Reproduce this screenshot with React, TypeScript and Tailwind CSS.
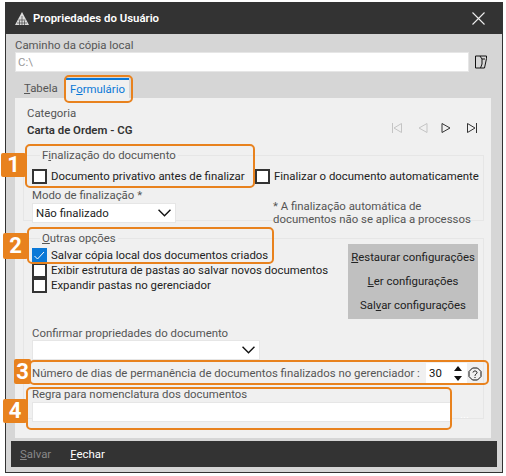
const orange = "absolute rounded-[5px] border-[2px] border-[#e8821e]";
const badge = "absolute flex items-center justify-center rounded-[2px] bg-[#e8821e] text-[22px] font-bold leading-none text-white";

function Check({ checked = false }: { checked?: boolean }) {
  if (checked) {
    return (
      <span className="flex size-[15px] shrink-0 items-center justify-center bg-[#0a78d7]">
        <svg viewBox="0 0 15 15" className="size-[15px]" fill="none" stroke="#fff" strokeWidth="1">
          <path d="M2.5 8 L5.5 11 L12 4" />
        </svg>
      </span>
    );
  }
  return <span className="size-[15px] shrink-0 border-2 border-[#333] bg-white" />;
}

function CheckRow({ label, checked }: { label: string; checked?: boolean }) {
  return (
    <div className="flex h-[15px] items-center gap-[4px] text-[#222]">
      <Check checked={checked} />
      <span className="whitespace-nowrap">{label}</span>
    </div>
  );
}

function Chevron({ className }: { className: string }) {
  return (
    <svg viewBox="0 0 12 7" className={className} fill="none" stroke="#111" strokeWidth="1.3">
      <path d="M0.5 0.5 L6 6 L11.5 0.5" />
    </svg>
  );
}

function Pager() {
  return (
    <div className="flex items-center">
      <svg width="12" height="12" viewBox="0 0 12 12" fill="none" stroke="#c4c4c4">
        <path d="M1.5 1V11M10.5 1.5V10.5L3 6Z" />
      </svg>
      <svg className="ml-[15px]" width="10" height="12" viewBox="0 0 10 12" fill="none" stroke="#c4c4c4">
        <path d="M9 1.5V10.5L1 6Z" />
      </svg>
      <svg className="ml-[13px]" width="10" height="12" viewBox="0 0 10 12" fill="none" stroke="#333">
        <path d="M1 1.5V10.5L9 6Z" />
      </svg>
      <svg className="ml-[15px]" width="12" height="12" viewBox="0 0 12 12" fill="none" stroke="#333">
        <path d="M1.5 1.5V10.5L9 6ZM10.5 1V11" />
      </svg>
    </div>
  );
}

export default function App() {
  return (
    <div
      className="relative h-[476px] w-[506px] overflow-hidden bg-white pl-[5px] pt-[2px] text-[11.4px] leading-[15px] text-[#555]"
      style={{ fontFamily: 'Roboto, Arial, sans-serif' }}
    >
      <div className="flex h-[471px] w-[498px] flex-col border border-t-0 border-[#333] bg-[#d6d6d6]">
        <header className="flex h-[32px] shrink-0 items-center justify-between bg-[#333] pl-[9px] pr-[17px] text-white">
          <div className="flex items-center gap-[4px]">
            <svg width="14" height="13" viewBox="0 0 14 13" fill="#ddd">
              <path d="M7 0 L14 13 H0 Z" />
              <path d="M7 4V13M4.5 8.5V13M9.5 8.5V13M2 11H12M3.5 8H10.5" stroke="#333" strokeWidth="0.6" />
            </svg>
            <span className="pt-[1px] font-semibold">Propriedades do Usuário</span>
          </div>
          <svg width="13" height="13" viewBox="0 0 13 13" stroke="#eee" strokeWidth="1.1">
            <path d="M0.5 0.5 L12.5 12.5 M12.5 0.5 L0.5 12.5" />
          </svg>
        </header>

        <div className="flex min-h-0 flex-1 flex-col pl-[9px] pr-[11px]">
          <div className="-mb-[1px] pt-[4px]">Caminho da cópia local</div>
          <div className="flex items-center">
            <div className="flex h-[20px] w-[454px] items-center border border-[#e6e6e6] bg-white pl-[2px] text-[#999]">C:\</div>
            <svg className="ml-[6px]" width="12" height="14" viewBox="0 0 12 14" fill="none" stroke="#111">
              <path d="M0.5 1H11.5V3.5L9.5 13H0.5Z M5 1 L7 4 V9 L5.5 13 M7 4 H10" />
            </svg>
          </div>

          <div className="mt-[6px] flex h-[20px] items-end pl-[9px]">
            <div className="flex h-[19px] w-[42px] items-center"><span><u>T</u>abela</span></div>
            <div className="flex h-[20px] w-[63px] items-center justify-center border-t-2 border-[#0a78d7] bg-[#f0f0f0] text-[#0a78d7]">
              <span>F<u>o</u>rmulário</span>
            </div>
          </div>

          <main className="flex-1 bg-[#f0f0f0] pl-[8px] pr-[7px] pt-[8px]">
            <div className="flex items-start justify-between pl-[4px] pr-[6px]">
              <div>
                <div>Categoria</div>
                <div className="mt-[2px] font-semibold text-[#333]">Carta de Ordem - CG</div>
              </div>
              <div className="pt-[16px]"><Pager /></div>
            </div>

            <fieldset className="mt-[11px] h-[72px] border border-[#e6e6e6] pl-[8px]">
              <legend className="ml-[8px] px-[2px] leading-[12px]">F<u>i</u>nalização do documento</legend>
              <div className="mt-[8px] flex">
                <div className="w-[223px]"><CheckRow label="Documento privativo antes de finalizar" /></div>
                <CheckRow label="Finalizar o documento automaticamente" />
              </div>
              <div className="mt-[4px] flex">
                <div className="w-[241px]">
                  <div>Modo de finalização *</div>
                  <div className="flex h-[20px] w-[144px] items-center justify-between border border-[#e6e6e6] bg-white pl-[3px] pr-[4px] text-[#222]">
                    Não finalizado
                    <Chevron className="h-[8px] w-[13px]" />
                  </div>
                </div>
                <div className="whitespace-nowrap pt-[12px] leading-[13px]">* A finalização automática de<br />documentos não se aplica a processos</div>
              </div>
            </fieldset>

            <fieldset className="mt-[11px] h-[187px] border border-[#e6e6e6] pl-[8px]">
              <legend className="ml-[8px] px-[2px] leading-[12px]"><u>O</u>utras opções</legend>
              <div className="flex justify-between pr-[5px]">
                <div className="mt-[4px] flex flex-col">
                  <CheckRow label="Salvar cópia local dos documentos criados" checked />
                  <CheckRow label="Exibir estrutura de pastas ao salvar novos documentos" />
                  <CheckRow label="Expandir pastas no gerenciador" />
                </div>
                <div className="flex h-[75px] w-[130px] flex-col items-center justify-around whitespace-nowrap bg-[#c0c0c0] py-[1px] text-[#222]">
                  <span><u>R</u>estaurar configurações</span>
                  <span><u>L</u>er configurações</span>
                  <span>Sal<u>v</u>ar configurações</span>
                </div>
              </div>

              <div className="-mb-[1px] mt-[7px]">Confirmar propriedades do documento</div>
              <div className="flex h-[20px] w-[228px] items-center justify-end border border-[#e6e6e6] bg-white pr-[4px]">
                <Chevron className="h-[8px] w-[13px]" />
              </div>

              <div className="mt-[3px] flex h-[21px] items-center">
                <span className="w-[394px] whitespace-nowrap">Número de dias de permanência de documentos finalizados no gerenciador :</span>
                <div className="flex h-[21px] w-[41px] items-center justify-between bg-white pl-[3px] pr-[5px] text-[#111]">
                  30
                  <svg width="8" height="15" viewBox="0 0 8 15" fill="#111">
                    <path d="M4 0 L8 5 H0 Z M0 10 H8 L4 15 Z" />
                  </svg>
                </div>
                <svg className="ml-[1px]" width="14" height="14" viewBox="0 0 14 14" fill="none" stroke="#111">
                  <path d="M4.5 1H9.5L13 4.5V9.5L9.5 13H4.5L1 9.5V4.5Z" />
                  <path d="M5 5.5C5 3.5 9 3.5 9 5.5C9 7 7 7 7 8.8M7 10V11" />
                </svg>
              </div>

              <div className="mt-[3px]">Regra para nomenclatura dos documentos</div>
              <div className="flex items-end">
                <div className="h-[20px] w-[419px] border border-[#e6e6e6] bg-white" />
                <span className="ml-[9px] text-[#fff]">...</span>
              </div>
            </fieldset>
          </main>
        </div>

        <footer className="mx-[5px] mb-[5px] mt-[3px] flex h-[26px] shrink-0 items-center gap-[19px] bg-[#333] pl-[9px]">
          <span className="text-[#888]"><u>S</u>alvar</span>
          <span className="text-white"><u>F</u>echar</span>
        </footer>
      </div>

      {/* destaques numerados sobre a tela */}
      <div className={`${orange} left-[64px] top-[75px] h-[28px] w-[69px]`} />
      <div className={`${orange} left-[25px] top-[144px] h-[44px] w-[230px]`} />
      <div className={`${orange} left-[27px] top-[227px] h-[37px] w-[247px]`} />
      <div className={`${orange} left-[29px] top-[360px] h-[25px] w-[460px]`} />
      <div className={`${orange} left-[26px] top-[387px] h-[43px] w-[426px]`} />
      <div className={`${badge} left-[1px] top-[153px] h-[24px] w-[25px]`}>1</div>
      <div className={`${badge} left-[3px] top-[233px] h-[26px] w-[25px]`}>2</div>
      <div className={`${badge} left-[14px] top-[359px] h-[25px] w-[17px]`}>3</div>
      <div className={`${badge} left-[3px] top-[399px] h-[24px] w-[24px]`}>4</div>
    </div>
  );
}
